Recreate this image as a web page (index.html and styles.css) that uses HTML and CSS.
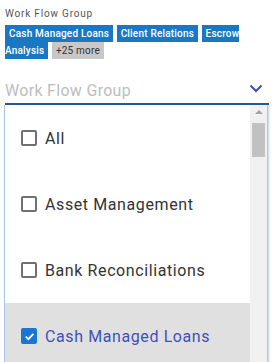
FILE: index.html
```html
<!DOCTYPE html>
<html>
<head>
<meta charset="utf-8">
<link rel="stylesheet" href="styles.css">
</head>
<body>
<div class="field">
  <div class="label">Work Flow Group</div>
  <div class="chips"><span class="chip">Cash Managed Loans</span> <span class="chip">Client Relations</span> <span class="chip">Escrow Analysis</span> <span class="chip more">+25 more</span></div>
  <div class="input">
    <span class="placeholder">Work Flow Group</span>
    <svg class="chevron" width="14" height="9" viewBox="0 0 14 9"><path d="M1.5 1.5 L7 7 L12.5 1.5" fill="none" stroke="#3f51b5" stroke-width="2"/></svg>
  </div>
  <div class="panel">
    <div class="list">
      <div class="item"><span class="box"></span><span class="text">All</span></div>
      <div class="item"><span class="box"></span><span class="text">Asset Management</span></div>
      <div class="item"><span class="box"></span><span class="text">Bank Reconciliations</span></div>
      <div class="item selected"><span class="box checked"><svg width="11" height="11" viewBox="0 0 11 11"><path d="M1.8 5.6 L4.4 8.1 L9.4 2.8" fill="none" stroke="#fff" stroke-width="1.8"/></svg></span><span class="text">Cash Managed Loans</span></div>
    </div>
    <div class="scrollbar">
      <div class="arrow"></div>
      <div class="thumb"></div>
    </div>
  </div>
</div>
</body>
</html>
```
FILE: styles.css
```css
html, body { margin: 0; padding: 0; background: #fff; overflow: hidden; }
body { width: 274px; height: 362px; font-family: Roboto, "Noto Sans", sans-serif; }
.field { padding: 7px 5px 0 5px; }
.label { font-size: 10px; line-height: 14px; color: #555; letter-spacing: 0.8px; }
.chips { margin-top: 4px; font-size: 10px; line-height: 17px; font-weight: 500; color: #fff; word-spacing: 1px; }
.chip { background: #1a78c2; padding: 3px 4px; letter-spacing: 0.2px; word-spacing: 0; }
.chip.more { background: #c8c8c8; color: #333; font-weight: 400; }
.input { position: relative; height: 44px; border-bottom: 2px solid #205a98; }
.placeholder { position: absolute; left: 0; top: 22px; font-size: 16px; line-height: 20px; color: #bdbdbd; letter-spacing: 0.3px; }
.chevron { position: absolute; right: 6px; top: 25px; }
.panel { margin-left: -1px; margin-right: 1px; display: flex; height: 262px; border-left: 1px solid #a8c4f0; border-right: 1px solid #a8c4f0; box-shadow: 1px 0 2px rgba(90,140,230,0.4); }
.list { flex: 1; }
.item { height: 66px; display: flex; align-items: center; padding-left: 16px; font-size: 16px; color: #333; }
.item.selected { background: #e0e0e0; color: #3f51b5; }
.box { width: 12px; height: 12px; border: 2px solid #707070; border-radius: 2px; margin-right: 8px; display: flex; align-items: center; justify-content: center; flex: none; }
.box.checked { background: #1976d2; border-color: #1976d2; }
.text { letter-spacing: 0.6px; }
.scrollbar { width: 17px; background: #f1f1f1; display: flex; flex-direction: column; align-items: center; }
.arrow { margin-top: 5px; width: 0; height: 0; border-left: 4px solid transparent; border-right: 4px solid transparent; border-bottom: 4px solid #a3a3a3; }
.thumb { margin-top: 9px; width: 13px; height: 34px; background: #c1c1c1; }
```
